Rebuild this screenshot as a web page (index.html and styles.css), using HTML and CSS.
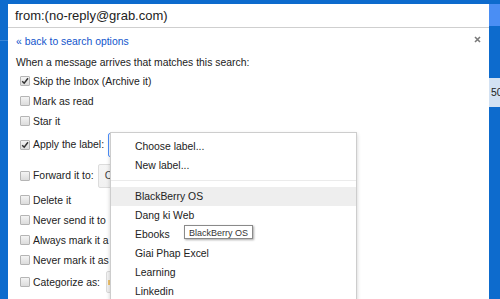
FILE: index.html
```html
<!DOCTYPE html>
<html>
<head>
<meta charset="utf-8">
<link rel="stylesheet" href="styles.css">
</head>
<body>
<div class="screen">
  <div class="edge-left"><div class="edge-line"></div></div>
  <div class="main">
    <div class="search">from:(no-reply@grab.com)</div>
    <div class="panel">
      <div class="back">
        <a class="back-link">« back to search options</a>
        <span class="close"><svg width="7" height="7" viewBox="0 0 7 7"><path d="M1 1L6 6M6 1L1 6" stroke="#7a7a7a" stroke-width="1.6" fill="none"/></svg></span>
      </div>
      <div class="intro">When a message arrives that matches this search:</div>
      <div class="row"><span class="cb"><svg width="8" height="8" viewBox="0 0 8 8"><path d="M1.2 4.2L3.2 6.2L7 1.2" stroke="#333" stroke-width="1.5" fill="none"/></svg></span><span>Skip the Inbox (Archive it)</span></div>
      <div class="row"><span class="cb"></span><span>Mark as read</span></div>
      <div class="row"><span class="cb"></span><span>Star it</span></div>
      <div class="row row-apply"><span class="cb"><svg width="8" height="8" viewBox="0 0 8 8"><path d="M1.2 4.2L3.2 6.2L7 1.2" stroke="#333" stroke-width="1.5" fill="none"/></svg></span><span>Apply the label:</span><span class="sel sel-focus"></span></div>
      <div class="row row-forward"><span class="cb"></span><span>Forward it to:</span><span class="sel sel-gray">Choose an address...</span></div>
      <div class="row"><span class="cb"></span><span>Delete it</span></div>
      <div class="row"><span class="cb"></span><span>Never send it to</span></div>
      <div class="row"><span class="cb"></span><span>Always mark it a</span></div>
      <div class="row"><span class="cb"></span><span>Never mark it as</span></div>
      <div class="row row-cat"><span class="cb"></span><span>Categorize as:</span><span class="sel sel-gray sel-cat"><span class="cat-mark"></span>Choose category...</span></div>

      <div class="menu">
        <div class="item">Choose label...</div>
        <div class="item">New label...</div>
        <div class="sep"></div>
        <div class="item hover">BlackBerry OS</div>
        <div class="item">Dang ki Web</div>
        <div class="item">Ebooks</div>
        <div class="item">Giai Phap Excel</div>
        <div class="item">Learning</div>
        <div class="item">Linkedin</div>
      </div>
      <div class="tip">BlackBerry OS</div>
    </div>
  </div>
  <div class="edge-right">
    <div class="er-top"></div>
    <div class="er-cell">50</div>
  </div>
</div>
</body>
</html>
```
FILE: styles.css
```css
html, body {
  margin: 0;
  padding: 0;
}
body {
  background: #0d6bcd;
  font-family: "Liberation Sans", Arial, sans-serif;
  color: #222;
}
.screen {
  display: flex;
  width: 500px;
  height: 299px;
  overflow: hidden;
  background: #0d6bcd;
}
.edge-left {
  width: 8px;
  flex: none;
}
.edge-line {
  margin-top: 40px;
  height: 1px;
  background: rgba(255,255,255,0.18);
}
.main {
  width: 481px;
  flex: none;
  padding-top: 4px;
  display: flex;
  flex-direction: column;
}
.search {
  height: 23px;
  line-height: 23px;
  padding-left: 7px;
  background: #fff;
  font-size: 13px;
  color: #222;
  border-bottom: 1px solid #cfcfcf;
}
.panel {
  flex: 1;
  background: #fff;
  position: relative;
  font-size: 10.4px;
}
.back {
  height: 26px;
  display: flex;
  align-items: center;
  justify-content: space-between;
  padding-left: 8px;
  padding-right: 8px;
}
.back-link {
  color: #1155cc;
}
.close {
  display: flex;
  margin-top: -3px;
}
.intro {
  height: 17px;
  line-height: 17px;
  padding-left: 8px;
}
.row {
  height: 20px;
  display: flex;
  align-items: center;
  white-space: nowrap;
}
.row-apply {
  height: 27px;
}
.row-forward {
  height: 29px;
  margin-top: 3px;
}
.row-cat {
  height: 24px;
}
.cb {
  width: 10px;
  height: 10px;
  box-sizing: border-box;
  margin-left: 12px;
  margin-right: 3px;
  border: 1px solid #b5b5b5;
  border-radius: 1px;
  background: linear-gradient(#f4f4f4, #dcdcdc);
  display: flex;
  align-items: center;
  justify-content: center;
  flex: none;
}
.sel {
  height: 24px;
  box-sizing: border-box;
  border: 1px solid #dcdcdc;
  border-radius: 2px;
  margin-left: 4px;
  width: 200px;
  flex: none;
  display: flex;
  align-items: center;
  padding-left: 6px;
  color: #444;
}
.sel-focus {
  border-color: #4d90fe;
  background: #fff;
  height: 24px;
}
.sel-gray {
  background: linear-gradient(#f5f5f5, #f1f1f1);
}
.sel-cat {
  margin-left: 6px;
  height: 22px;
  padding-left: 1px;
}
.cat-mark {
  width: 2px;
  height: 5px;
  background: #f0c36d;
  margin-right: 6px;
}
.menu {
  position: absolute;
  left: 102px;
  top: 104px;
  width: 247px;
  height: 200px;
  box-sizing: border-box;
  background: #fff;
  border: 1px solid #cdcdcd;
  box-shadow: 0 2px 4px rgba(0,0,0,0.2);
  padding-top: 4px;
  font-size: 10.4px;
}
.item {
  height: 19px;
  line-height: 19px;
  padding-left: 24px;
  color: #222;
}
.item.hover {
  background: #eeeeee;
}
.sep {
  border-top: 1px solid #ebebeb;
  margin: 5px 0 6px;
}
.tip {
  position: absolute;
  left: 176px;
  top: 197px;
  height: 14px;
  line-height: 14px;
  box-sizing: border-box;
  padding: 0 4px;
  font-size: 9px;
  color: #333;
  background: #fff;
  border: 1px solid #8a8a8a;
  box-shadow: 1px 1px 2px rgba(0,0,0,0.35);
  white-space: nowrap;
}
.edge-right {
  width: 11px;
  flex: none;
  padding-top: 4px;
}
.er-top {
  height: 22px;
  background: #4a8ef4;
}
.er-cell {
  margin-top: 52px;
  height: 29px;
  line-height: 29px;
  background: #d3e2f3;
  font-size: 10.4px;
  color: #222;
  padding-left: 2px;
  white-space: nowrap;
  overflow: hidden;
}
```
